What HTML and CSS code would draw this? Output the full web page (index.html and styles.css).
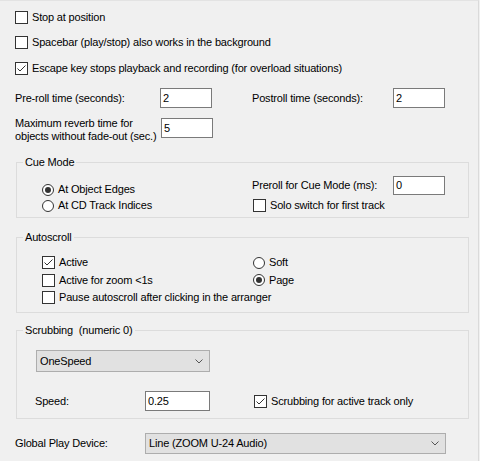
FILE: index.html
```html
<!DOCTYPE html>
<html>
<head>
<meta charset="utf-8">
<link rel="stylesheet" href="styles.css">
</head>
<body>
<div class="panel">
  <div class="opts">
    <div class="chk"><span class="box"></span><span>Stop at position</span></div>
    <div class="chk r2"><span class="box"></span><span>Spacebar (play/stop) also works in the background</span></div>
    <div class="chk r3"><span class="box on"><svg width="11" height="11" viewBox="0 0 11 11"><path d="M1.5 5.5 L4 8 L9.5 2.5" fill="none" stroke="#333" stroke-width="1"/></svg></span><span>Escape key stops playback and recording (for overload situations)</span></div>
  </div>

  <div class="times">
    <span class="lbl w145">Pre-roll time (seconds):</span>
    <span class="edit w52">2</span>
    <span class="lbl post">Postroll time (seconds):</span>
    <span class="edit w52">2</span>
  </div>

  <div class="reverb">
    <span class="lbl w146">Maximum reverb time for<br>objects without fade-out (sec.)</span>
    <span class="edit w52 rv">5</span>
  </div>

  <fieldset class="group cue">
    <legend>Cue Mode</legend>
    <div class="inner cue-inner">
      <div class="left">
        <div class="radio"><span class="dot on"></span><span>At Object Edges</span></div>
        <div class="radio"><span class="dot"></span><span>At CD Track Indices</span></div>
      </div>
      <div class="right">
        <div class="prerow">
          <span class="lbl w141">Preroll for Cue Mode (ms):</span>
          <span class="edit w52 h19">0</span>
        </div>
        <div class="chk solo"><span class="box"></span><span>Solo switch for first track</span></div>
      </div>
    </div>
  </fieldset>

  <fieldset class="group auto">
    <legend>Autoscroll</legend>
    <div class="inner auto-inner">
      <div class="chk"><span class="box on"><svg width="11" height="11" viewBox="0 0 11 11"><path d="M1.5 5.5 L4 8 L9.5 2.5" fill="none" stroke="#333" stroke-width="1"/></svg></span><span>Active</span></div>
      <div class="radio rc"><span class="dot"></span><span>Soft</span></div>
      <div class="chk"><span class="box"></span><span>Active for zoom &lt;1s</span></div>
      <div class="radio rc"><span class="dot on"></span><span>Page</span></div>
      <div class="chk span2"><span class="box"></span><span>Pause autoscroll after clicking in the arranger</span></div>
    </div>
  </fieldset>

  <fieldset class="group scrub">
    <legend>Scrubbing&nbsp; (numeric 0)</legend>
    <div class="inner scrub-inner">
      <div class="combo w174"><span>OneSpeed</span><svg width="8" height="5" viewBox="0 0 8 5"><path d="M0.5 0.5 L4 4 L7.5 0.5" fill="none" stroke="#555" stroke-width="1"/></svg></div>
      <div class="speedrow">
        <span class="lbl w110">Speed:</span>
        <span class="edit w65">0.25</span>
        <div class="chk sc"><span class="box on"><svg width="11" height="11" viewBox="0 0 11 11"><path d="M1.5 5.5 L4 8 L9.5 2.5" fill="none" stroke="#333" stroke-width="1"/></svg></span><span>Scrubbing for active track only</span></div>
      </div>
    </div>
  </fieldset>

  <div class="device">
    <span class="lbl w130">Global Play Device:</span>
    <div class="combo w301"><span>Line (ZOOM U-24 Audio)</span><svg width="8" height="5" viewBox="0 0 8 5"><path d="M0.5 0.5 L4 4 L7.5 0.5" fill="none" stroke="#555" stroke-width="1"/></svg></div>
  </div>
</div>
</body>
</html>
```

FILE: styles.css
```css
* { box-sizing: border-box; }
html, body {
  margin: 0;
  padding: 0;
  background: #f0f0f0;
}
body {
  font-family: "Liberation Sans", Arial, sans-serif;
  font-size: 11px;
  line-height: 13px;
  letter-spacing: -0.17px;
  color: #000;
}
.panel {
  width: 479px;
  height: 461px;
  border-right: 1px solid #dadada;
  border-top: 1px solid #e3e3e3;
  padding: 10px 0 0 15px;
}
.opts { display: flex; flex-direction: column; }
.chk, .radio {
  display: flex;
  align-items: center;
  height: 13px;
  white-space: nowrap;
}
.r2 { margin-top: 12px; }
.r3 { margin-top: 13px; }
.box {
  width: 13px;
  height: 13px;
  border: 1px solid #333;
  background: #fff;
  margin-right: 4px;
  flex: none;
  display: flex;
  align-items: center;
  justify-content: center;
}
.dot {
  width: 12px;
  height: 12px;
  border: 1px solid #333;
  border-radius: 50%;
  background: #fff;
  margin-right: 4px;
  flex: none;
  display: flex;
  align-items: center;
  justify-content: center;
}
.dot.on::after {
  content: "";
  width: 6px;
  height: 6px;
  border-radius: 50%;
  background: #333;
}
.lbl { display: inline-block; white-space: nowrap; }
.w145 { width: 145px; }
.w146 { width: 146px; }
.w141 { width: 141px; }
.w110 { width: 110px; }
.w130 { width: 130px; }
.post { width: 141px; margin-left: 40px; }
.edit {
  display: inline-flex;
  align-items: center;
  height: 20px;
  background: #fff;
  border: 1px solid #7a7a7a;
  padding-left: 2px;
  flex: none;
}
.w52 { width: 52px; }
.w65 { width: 65px; }
.h19 { height: 19px; }
.times {
  display: flex;
  align-items: center;
  margin-top: 13px;
}
.reverb {
  display: flex;
  align-items: flex-start;
  margin-top: 9px;
}
.rv { margin-top: 1px; }
.group {
  margin: 0 0 0 1px;
  padding: 0;
  width: 453px;
  border: 1px solid #dcdcdc;
  min-width: 0;
}
.group legend {
  margin-left: 6px;
  padding: 0 2px;
  line-height: 13px;
}
.cue { margin-top: 13px; }
.cue-inner { display: flex; height: 48px; }
.cue .left {
  width: 235px;
  padding: 14px 0 0 25px;
  display: flex;
  flex-direction: column;
  gap: 3px;
}
.cue .left .radio { height: 13px; }
.cue .right { padding-top: 7px; }
.prerow { display: flex; align-items: center; }
.solo { margin: 4px 0 0 1px; }
.auto { margin-top: 13px; }
.auto-inner {
  height: 68px;
  display: grid;
  grid-template-columns: 211px auto;
  grid-auto-rows: 13px;
  row-gap: 4.5px;
  padding: 12px 0 0 25px;
}
.rc { margin-left: 0; }
.span2 { grid-column: 1 / span 2; }
.scrub { margin-top: 11px; }
.scrub-inner { height: 81px; padding: 13px 0 0 19px; }
.combo {
  display: flex;
  align-items: center;
  justify-content: space-between;
  height: 22px;
  background: #e1e1e1;
  border: 1px solid #adadad;
  padding: 0 6px 0 3px;
  white-space: nowrap;
}
.w174 { width: 174px; }
.w301 { width: 301px; height: 21px; }
.speedrow {
  display: flex;
  align-items: center;
  margin-top: 19px;
  margin-left: -1px;
}
.sc { margin-left: 44px; }
.device {
  display: flex;
  align-items: center;
  margin-top: 14px;
}
```
